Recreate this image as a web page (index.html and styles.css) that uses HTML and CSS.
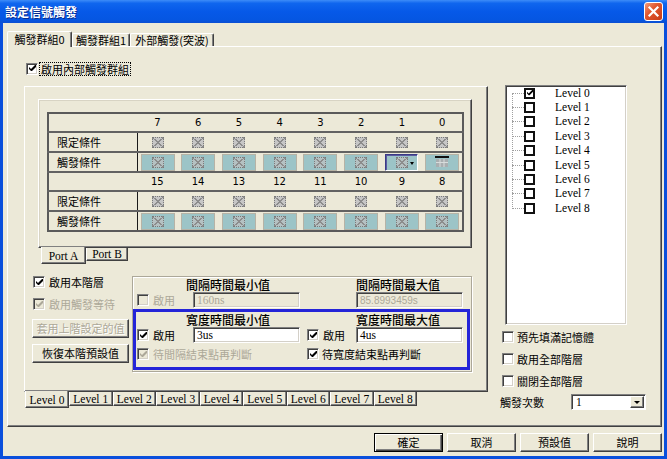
FILE: index.html
```html
<!DOCTYPE html>
<html lang="zh-Hant">
<head>
<meta charset="utf-8">
<title>設定信號觸發</title>
<link rel="stylesheet" href="styles.css">
</head>
<body>
<div class="window">
  <div class="titlebar">
    <span class="title">設定信號觸發</span>
    <span class="close"><svg viewBox="0 0 17 17" width="17" height="17"><path d="M4.5 4.5L12.5 12.5M12.5 4.5L4.5 12.5" stroke="#fff" stroke-width="2.2" stroke-linecap="square"/></svg></span>
  </div>
  <div class="client">
    <div class="tabs">
      <div class="tab sel w0">觸發群組0</div>
      <div class="tab w1">觸發群組1</div>
      <div class="tab w2">外部觸發(突波)</div>
    </div>
    <div class="tabpanel">
      <div class="row-enable">
        <span class="cb"><svg class="ck" viewBox="0 0 7 7"><path d="M0 2L2 4L6 0H7V2L3 6H2L0 4Z"/></svg></span>
        <span class="focus">啟用內部觸發群組</span>
      </div>
      <div class="main">
        <div class="lvl">
          <div class="lvl-panel">
            <div class="port">
              <div class="port-panel">
                <table class="sig">
                  <tr class="hd"><td class="lab"></td><td>7</td><td>6</td><td>5</td><td>4</td><td>3</td><td>2</td><td>1</td><td>0</td></tr>
                  <tr class="r"><td class="lab">限定條件</td><td><i class="xi"></i></td><td><i class="xi"></i></td><td><i class="xi"></i></td><td><i class="xi"></i></td><td><i class="xi"></i></td><td><i class="xi"></i></td><td><i class="xi"></i></td><td><i class="xi"></i></td></tr>
                  <tr class="r"><td class="lab">觸發條件</td><td><span class="tl"><i class="xi"></i></span></td><td><span class="tl"><i class="xi"></i></span></td><td><span class="tl"><i class="xi"></i></span></td><td><span class="tl"><i class="xi"></i></span></td><td><span class="tl"><i class="xi"></i></span></td><td><span class="tl"><i class="xi"></i></span></td><td><span class="tl tsel"><i class="xi"></i><b class="dd"></b></span></td><td><span class="tl"><svg class="gridic" viewBox="0 0 14 12" width="14" height="12"><rect x="0" y="0" width="14" height="2" fill="#111"/><rect x="1" y="3" width="12" height="8" fill="#a9aeb0"/><path d="M1 6.5H13M5 3V11M9 3V11" stroke="#d8dcdc" stroke-width="1"/></svg></span></td></tr>
                  <tr class="hd"><td class="lab"></td><td>15</td><td>14</td><td>13</td><td>12</td><td>11</td><td>10</td><td>9</td><td>8</td></tr>
                  <tr class="r"><td class="lab">限定條件</td><td><i class="xi"></i></td><td><i class="xi"></i></td><td><i class="xi"></i></td><td><i class="xi"></i></td><td><i class="xi"></i></td><td><i class="xi"></i></td><td><i class="xi"></i></td><td><i class="xi"></i></td></tr>
                  <tr class="r"><td class="lab">觸發條件</td><td><span class="tl"><i class="xi"></i></span></td><td><span class="tl"><i class="xi"></i></span></td><td><span class="tl"><i class="xi"></i></span></td><td><span class="tl"><i class="xi"></i></span></td><td><span class="tl"><i class="xi"></i></span></td><td><span class="tl"><i class="xi"></i></span></td><td><span class="tl"><i class="xi"></i></span></td><td><span class="tl"><i class="xi"></i></span></td></tr>
                </table>
              </div>
              <div class="port-tabs">
                <div class="btab sel pa">Port A</div>
                <div class="btab pb">Port B</div>
              </div>
            </div>
            <div class="lower">
              <div class="lcol">
                <div class="cbrow r1"><span class="cb"><svg class="ck" viewBox="0 0 7 7"><path d="M0 2L2 4L6 0H7V2L3 6H2L0 4Z"/></svg></span><span>啟用本階層</span></div>
                <div class="cbrow r2 dis"><span class="cb dis"><svg class="ck" viewBox="0 0 7 7"><path d="M0 2L2 4L6 0H7V2L3 6H2L0 4Z"/></svg></span><span>啟用觸發等待</span></div>
                <div class="btn dis b1">套用上階設定的值</div>
                <div class="btn b2">恢復本階預設值</div>
              </div>
              <div class="grp">
                <div class="grid hdr">
                  <span class="h1">間隔時間最小值</span>
                  <span class="h2">間隔時間最大值</span>
                </div>
                <div class="grid irow">
                  <span class="cb dis"></span>
                  <span class="lbl dis">啟用</span>
                  <span class="inp dis serif">160ns</span>
                  <span class="sp"></span>
                  <span></span>
                  <span></span>
                  <span class="inp dis sans">85.8993459s</span>
                </div>
                <div class="blue">
                  <div class="grid hdr">
                    <span class="h1">寬度時間最小值</span>
                    <span class="h2">寬度時間最大值</span>
                  </div>
                  <div class="grid irow">
                    <span class="cb"><svg class="ck" viewBox="0 0 7 7"><path d="M0 2L2 4L6 0H7V2L3 6H2L0 4Z"/></svg></span>
                    <span class="lbl">啟用</span>
                    <span class="inp serif">3us</span>
                    <span class="sp"></span>
                    <span class="cb"><svg class="ck" viewBox="0 0 7 7"><path d="M0 2L2 4L6 0H7V2L3 6H2L0 4Z"/></svg></span>
                    <span class="lbl">啟用</span>
                    <span class="inp serif">4us</span>
                  </div>
                  <div class="grid wrow">
                    <span class="cb dis"><svg class="ck" viewBox="0 0 7 7"><path d="M0 2L2 4L6 0H7V2L3 6H2L0 4Z"/></svg></span>
                    <span class="wl dis">待間隔結束點再判斷</span>
                    <span class="cb c5"><svg class="ck" viewBox="0 0 7 7"><path d="M0 2L2 4L6 0H7V2L3 6H2L0 4Z"/></svg></span>
                    <span class="wl w6">待寬度結束點再判斷</span>
                  </div>
                </div>
              </div>
            </div>
          </div>
          <div class="lvl-tabs">
            <div class="btab sel l0">Level 0</div>
            <div class="btab ln">Level 1</div>
            <div class="btab ln">Level 2</div>
            <div class="btab ln">Level 3</div>
            <div class="btab ln">Level 4</div>
            <div class="btab ln">Level 5</div>
            <div class="btab ln">Level 6</div>
            <div class="btab ln">Level 7</div>
            <div class="btab ln">Level 8</div>
          </div>
        </div>
        <div class="rcol">
          <div class="tree">
            <div class="items">
              <div class="ti"><i class="hl"></i><span class="tcb"><svg class="ck" viewBox="0 0 7 7"><path d="M0 2L2 4L6 0H7V2L3 6H2L0 4Z"/></svg></span><span class="tt">Level 0</span></div>
              <div class="ti"><i class="hl"></i><span class="tcb"></span><span class="tt">Level 1</span></div>
              <div class="ti"><i class="hl"></i><span class="tcb"></span><span class="tt">Level 2</span></div>
              <div class="ti"><i class="hl"></i><span class="tcb"></span><span class="tt">Level 3</span></div>
              <div class="ti"><i class="hl"></i><span class="tcb"></span><span class="tt">Level 4</span></div>
              <div class="ti"><i class="hl"></i><span class="tcb"></span><span class="tt">Level 5</span></div>
              <div class="ti"><i class="hl"></i><span class="tcb"></span><span class="tt">Level 6</span></div>
              <div class="ti"><i class="hl"></i><span class="tcb"></span><span class="tt">Level 7</span></div>
              <div class="ti"><i class="hl"></i><span class="tcb"></span><span class="tt">Level 8</span></div>
            </div>
          </div>
          <div class="rcb first"><span class="cb"></span><span>預先填滿記憶體</span></div>
          <div class="rcb"><span class="cb"></span><span>啟用全部階層</span></div>
          <div class="rcb"><span class="cb"></span><span>關閉全部階層</span></div>
          <div class="cnt">
            <span class="cntl">觸發次數</span>
            <span class="combo"><span class="cv">1</span><span class="cbtn"><b class="tri"></b></span></span>
          </div>
        </div>
      </div>
    </div>
    <div class="buttons">
      <div class="btn bb def">確定</div>
      <div class="btn bb">取消</div>
      <div class="btn bb">預設值</div>
      <div class="btn bb">說明</div>
    </div>
  </div>
</div>
</body>
</html>
```
FILE: styles.css
```css
* { box-sizing: border-box; }
html, body { margin: 0; padding: 0; }
body {
  width: 667px; height: 459px; overflow: hidden;
  font-family: "Noto Sans CJK TC", "Noto Sans", sans-serif;
  font-size: 11px; line-height: 13px; color: #000;
  background: #ece9d8;
}
.window {
  width: 667px; height: 459px;
  display: flex; flex-direction: column;
  background: #0a4fdc;
}
.titlebar {
  height: 23px; flex: none;
  display: flex; align-items: center; justify-content: space-between;
  padding: 0 4px 0 5px;
  background: linear-gradient(#3d8cf8 0%, #0f66ee 14%, #0659e8 50%, #0556e2 85%, #0b4fd2 100%);
}
.title {
  color: #fff; font-weight: bold; font-size: 12px; line-height: 14px;
  text-shadow: 1px 1px 0 #0a2b8c;
}
.close {
  width: 19px; height: 19px;
  border: 1px solid #fff; border-radius: 3px;
  background: linear-gradient(135deg, #f39b7c 0%, #e2582f 40%, #c83c18 100%);
  display: flex; align-items: center; justify-content: center;
}
.client {
  flex: 1; margin: 0 3px 3px;
  background: #ece9d8;
  padding: 8px 2px 0 4px;
  display: flex; flex-direction: column;
}

/* top tabs */
.tabs { display: flex; align-items: flex-end; height: 15px; position: relative; z-index: 2; }
.tab {
  height: 13px;
  border: 1px solid #fff; border-right-color: #404040; border-bottom: none;
  box-shadow: inset -1px 0 #808080;
  border-radius: 2px 2px 0 0;
  display: flex; align-items: center; justify-content: center;
  background: #ece9d8; line-height: 12px;
}
.tab.sel { height: 16px; margin-bottom: -1px; padding-bottom: 1px; }
.w0 { width: 65px; }
.w1 { width: 58px; }
.w2 { width: 84px; }

.tabpanel {
  width: 655px; height: 381px;
  border: 1px solid; border-color: #fff #404040 #404040 #fff;
  box-shadow: inset -1px -1px #808080;
  padding: 14px 0 0 16px;
}

/* checkbox */
.cb {
  width: 12px; height: 12px; flex: none;
  background: #fff;
  border: 1px solid; border-color: #808080 #fff #fff #808080;
  box-shadow: inset 1px 1px #404040, inset -1px -1px #d4d0c8;
  display: inline-flex; align-items: center; justify-content: center;
}
.cb.dis { background: #ece9d8; }
.ck { width: 7px; height: 7px; display: block; }
.ck path { fill: #000; }
.cb.dis .ck path { fill: #aca899; }
.dis { color: #aca899; }

.row-enable { display: flex; align-items: center; height: 15px; margin-left: 2px; gap: 1px; }
.focus { border: 1px dotted #000; padding: 0 1px; line-height: 12px; }

.main { display: flex; margin-top: 10px; gap: 11px; }

/* level tab control */
.lvl { width: 464px; display: flex; flex-direction: column; }
.lvl-panel {
  height: 306px;
  border: 1px solid; border-color: #fff #404040 #404040 #fff;
  box-shadow: inset -1px -1px #808080;
  padding: 12px 0 0 7px;
}
.port { width: 434px; margin-left: 6px; }
.port-panel {
  height: 149px;
  border: 1px solid; border-color: #fff #404040 #404040 #fff;
  box-shadow: inset -1px -1px #808080, inset 1px 1px #d8d4c4;
  padding: 12px 0 0 8px;
}
.sig {
  border-collapse: collapse; table-layout: fixed;
  width: 417px;
  border: 2px solid #5a5a5a;
}
.sig td {
  padding: 0; height: 20px; text-align: center; vertical-align: middle;
  font-family: "DejaVu Sans", sans-serif; font-size: 10px;
}
.sig tr + tr td { border-top: 2px solid #626262; }
.sig tr.hd td { height: 19px; }
.sig td.lab {
  width: 89px; text-align: left; padding-left: 8px;
  font-family: "Noto Sans CJK TC", sans-serif; font-size: 11px;
}
.sig tr.r td.lab { border-right: 1px solid #1a1a1a; }
.xi {
  display: block; margin: 0 auto;
  width: 12px; height: 11px;
  border: 1px dotted #7a7a7a;
  background:
    linear-gradient(to top right, transparent calc(50% - 0.6px), #8c8c8c calc(50% - 0.6px), #8c8c8c calc(50% + 0.6px), transparent calc(50% + 0.6px)),
    linear-gradient(to bottom right, transparent calc(50% - 0.6px), #8c8c8c calc(50% - 0.6px), #8c8c8c calc(50% + 0.6px), transparent calc(50% + 0.6px)),
    #c6c6c6;
}
.tl {
  display: flex; align-items: center; justify-content: center;
  width: 34px; height: 17px; margin: 0 auto;
  background: #9cc4c7;
  border: 1px solid #b6b3a6;
  position: relative;
}
.tl .xi { background-color: #b5c1c2; }
.tl.tsel {
  border-color: #3a3a86 #fff #fff #3a3a86;
  box-shadow: inset 1px 1px #5a5aa0;
  width: 33px;
}
.dd {
  position: absolute; right: 3px; top: 7px;
  width: 0; height: 0;
  border-left: 2px solid transparent; border-right: 2px solid transparent;
  border-top: 3px solid #000;
}
.gridic { display: block; }

/* bottom tabs */
.port-tabs { display: flex; align-items: flex-start; padding-left: 3px; }
.btab {
  height: 14px;
  border: 1px solid; border-top: none;
  border-color: #fff #404040 #404040 #fff;
  box-shadow: inset -1px -1px #808080;
  display: flex; align-items: center; justify-content: center;
  font-family: "Liberation Serif", serif; font-size: 11.5px; line-height: 12px;
  background: #ece9d8;
}
.btab.sel { height: 17px; margin-top: -1px; position: relative; padding-top: 2px; }
.pa { width: 45px; }
.pb { width: 42px; height: 13px; }

.lvl-tabs { display: flex; align-items: flex-start; padding-left: 1px; position: relative; }
.l0 { width: 44px; }
.ln { width: 43.5px; }

/* lower part */
.lower { display: flex; margin-top: 11px; }
.lcol { width: 97px; display: flex; flex-direction: column; }
.cbrow { display: flex; align-items: center; height: 14px; gap: 4px; padding-left: 1px; }
.cbrow.r2 { margin-top: 8px; }
.btn {
  height: 19px;
  background: #ece9d8;
  border: 1px solid; border-color: #fff #404040 #404040 #fff;
  box-shadow: inset -1px -1px #808080;
  display: flex; align-items: center; justify-content: center;
}
.btn.dis { color: #aca899; text-shadow: 1px 1px 0 #fff; }
.b1 { margin-top: 8px; }
.b2 { margin-top: 6px; }

.grp {
  width: 340px; height: 96px;
  margin-left: 3px; margin-top: 1px;
  border: 1px solid #aca899;
  box-shadow: inset 1px 1px #fff, 1px 1px 0 #fff;
}
.grid {
  display: grid;
  grid-template-columns: 13px 43px 107px 7px 13px 36px 107px;
  align-items: center;
  padding-left: 4px;
}
.hdr { height: 14px; }
.h1 { grid-column: 1 / span 4; padding-left: 49px; font-weight: 500; font-size: 12px; }
.h2 { grid-column: 5 / span 3; padding-left: 49px; font-weight: 500; font-size: 12px; }
.irow { height: 16px; margin-top: 1px; }
.lbl { padding-left: 3px; }
.inp {
  height: 16px;
  background: #fff;
  border: 1px solid; border-color: #808080 #fff #fff #808080;
  box-shadow: inset 1px 1px #404040, inset -1px -1px #d4d0c8;
  padding: 1px 0 0 3px; line-height: 13px;
}
.inp.dis { background: #ece9d8; color: #aca899; }
.serif { font-family: "Liberation Serif", serif; font-size: 11.5px; }
.sans { font-family: "Liberation Sans", sans-serif; font-size: 10px; }
.blue {
  margin-top: 1px;
  width: 337px; height: 61px;
  border: 3px solid #2424d8;
}
.blue .grid { padding-left: 1px; }
.wrow { height: 14px; margin-top: 4px; }
.wl { grid-column: 2 / span 3; padding-left: 3px; }
.c5 { grid-column: 5; }
.wl.w6 { grid-column: 6 / span 2; padding-left: 2px; }

/* right column */
.rcol { width: 148px; display: flex; flex-direction: column; }
.tree {
  margin-left: 6px; margin-top: -1px;
  width: 122px; height: 240px;
  background: #fff;
  border: 1px solid; border-color: #808080 #fff #fff #808080;
  box-shadow: inset 1px 1px #404040, inset -1px -1px #d4d0c8;
}
.items { position: relative; }
.items::before {
  content: ""; position: absolute;
  left: 6px; top: 7px; bottom: 7px;
  border-left: 1px dotted #a0a0a0;
}
.ti { height: 14.4px; display: flex; align-items: center; padding-left: 6px; }
.hl { width: 12px; border-top: 1px dotted #a0a0a0; display: block; }
.tcb {
  width: 11px; height: 11px;
  border: 2px solid #111; background: #fff;
  display: flex; align-items: center; justify-content: center;
}
.tcb .ck { width: 6px; height: 6px; }
.tt { margin-left: 20px; font-family: "Liberation Serif", serif; font-size: 11.5px; }

.rcb { display: flex; align-items: center; height: 12px; gap: 3px; margin-left: 3px; margin-top: 10px; }
.rcb.first { margin-top: 6px; }
.cnt { display: flex; align-items: center; margin-top: 7px; height: 16px; }
.cntl { width: 72px; padding-left: 1px; }
.combo {
  width: 75px; height: 16px;
  background: #fff;
  border: 1px solid; border-color: #808080 #fff #fff #808080;
  box-shadow: inset 1px 1px #404040;
  display: flex; align-items: center; justify-content: space-between;
  padding: 1px 1px 1px 4px;
}
.cv { font-family: "Liberation Serif", serif; font-size: 11.5px; }
.cbtn {
  width: 14px; height: 12px;
  background: #ece9d8;
  border: 1px solid; border-color: #fff #404040 #404040 #fff;
  box-shadow: inset -1px -1px #808080;
  display: flex; align-items: center; justify-content: center;
}
.tri { width: 0; height: 0; border-left: 3px solid transparent; border-right: 3px solid transparent; border-top: 3px solid #000; }

/* bottom buttons */
.buttons { display: flex; justify-content: flex-end; gap: 4px; margin-top: 6px; }
.bb { width: 69px; }
.btn.def {
  border: 1px solid #000;
  box-shadow: inset 1px 1px #fff, inset -1px -1px #404040, inset -2px -2px #808080;
}
```
